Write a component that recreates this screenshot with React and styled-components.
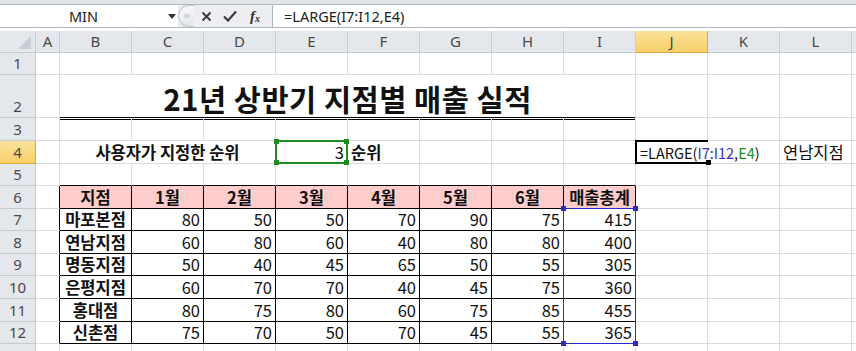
import React from "react";
import styled, { createGlobalStyle } from "styled-components";

const GlobalStyle = createGlobalStyle`
  html, body { margin: 0; padding: 0; background: #fff; }
  body { font-family: "Noto Sans CJK KR", "Noto Sans", sans-serif; }
`;

const COLS = ["A", "B", "C", "D", "E", "F", "G", "H", "I", "J", "K", "L", "M"];

const HEADER = ["지점", "1월", "2월", "3월", "4월", "5월", "6월", "매출총계"];

const BRANCHES = [
  ["마포본점", 80, 50, 50, 70, 90, 75, 415],
  ["연남지점", 60, 80, 60, 40, 80, 80, 400],
  ["명동지점", 50, 40, 45, 65, 50, 55, 305],
  ["은평지점", 60, 70, 70, 40, 45, 75, 360],
  ["홍대점", 80, 75, 80, 60, 75, 85, 455],
  ["신촌점", 75, 70, 50, 70, 45, 55, 365],
];

const GRID = "#dadcdd";

const Window = styled.div`
  width: 856px;
  height: 351px;
  overflow: hidden;
  display: flex;
  flex-direction: column;
  background: #fff;
`;

const TopBand = styled.div`
  flex: 0 0 4px;
  background: #e1e5ea;
`;

const FormulaBar = styled.div`
  flex: 0 0 24px;
  box-sizing: border-box;
  border-top: 1px solid #aeb6c1;
  border-bottom: 1px solid #aeb6c1;
  display: flex;
  align-items: stretch;
  font-family: "Noto Sans", sans-serif;
  font-size: 14.5px;
  color: #222;
`;

const NameBox = styled.div`
  width: 163px;
  margin-left: 2px;
  display: flex;
  align-items: center;
  justify-content: center;
`;

const DropArrow = styled.div`
  width: 13px;
  display: flex;
  align-items: center;
  justify-content: center;
`;

const Buttons = styled.div`
  width: 94px;
  background: #eceef1;
  display: flex;
  align-items: center;
`;

const Grip = styled.div`
  width: 16px;
  height: 22px;
  box-sizing: border-box;
  border: 1px solid #c3c8cf;
  border-right: none;
  border-radius: 11px 0 0 11px;
  background: linear-gradient(#f7f8fa, #e3e6ea);
  display: flex;
  align-items: center;
  justify-content: center;
  &::after {
    content: "";
    width: 6px;
    height: 4px;
    border-radius: 2px;
    background: #cfd3d9;
  }
`;

const IconButton = styled.div`
  width: ${(p) => p.$w}px;
  display: flex;
  align-items: center;
  justify-content: center;
`;

const Fx = styled.span`
  font-family: "Liberation Serif", serif;
  font-style: italic;
  font-weight: 700;
  font-size: 15px;
  color: #333;
  sub {
    font-size: 10px;
    vertical-align: -1px;
  }
`;

const FormulaInput = styled.div`
  flex: 1;
  border-left: 1px solid #aeb6c1;
  padding-left: 11px;
  display: flex;
  align-items: center;
`;

const Gap = styled.div`
  flex: 0 0 3px;
`;

const Sheet = styled.div`
  flex: 1;
  min-height: 0;
  overflow: hidden;
  display: grid;
  grid-template-columns: 36px 24px repeat(11, 72px) 1fr;
  grid-template-rows: 22px 22px 43px 23px 22.5px 22.5px repeat(8, 22.6px);
`;

const Head = styled.div`
  grid-row: ${(p) => p.$row};
  grid-column: ${(p) => p.$col};
  box-sizing: border-box;
  border-right: 1px solid #c5cbd3;
  border-bottom: 1px solid #c5cbd3;
  background: ${(p) =>
    p.$active ? "linear-gradient(#fbe29a, #f8cf68)" : "#e4e7ec"};
  ${(p) => p.$active && "border-bottom-color: #d9a93f; border-right-color: #d9a93f;"}
  display: flex;
  align-items: flex-end;
  justify-content: center;
  line-height: 21px;
  font-family: "Noto Sans", sans-serif;
  font-size: 15px;
  color: #4a4a4a;
`;

const Corner = styled(Head)`
  position: relative;
  &::after {
    content: "";
    position: absolute;
    right: 4px;
    bottom: 3px;
    width: 13px;
    height: 13px;
    background: #c9cdd3;
    clip-path: polygon(100% 0, 100% 100%, 0 100%);
  }
`;

const Cell = styled.div`
  grid-row: ${(p) => p.$row};
  grid-column: ${(p) => p.$col} / span ${(p) => p.$span || 1};
  box-sizing: border-box;
  border-right: 1px solid ${(p) => p.$right || GRID};
  border-bottom: 1px solid ${(p) => p.$bottom || GRID};
  background: ${(p) => p.$fill || "transparent"};
  display: flex;
  align-items: flex-end;
  justify-content: ${(p) =>
    p.$align === "right" ? "flex-end" : p.$align === "center" ? "center" : "flex-start"};
  padding: 0 3px 0;
  font-size: 16.5px;
  line-height: 21px;
  font-weight: ${(p) => (p.$bold ? 700 : 400)};
  color: #111;
  white-space: nowrap;
  overflow: visible;
`;

const Title = styled(Cell)`
  border-bottom: 3px double #000;
  margin-bottom: -2px;
  font-size: 29.5px;
  line-height: 34px;
  padding-bottom: 2px;
  letter-spacing: 0.5px;
`;

const Editing = styled(Cell)`
  font-size: 14.5px;
  padding-left: 4px;
`;

const Ref = styled.span`
  color: ${(p) => p.$color};
`;

const Caret = styled.span`
  display: inline-block;
  width: 1px;
  height: 18px;
  margin-left: 1px;
  background: #000;
  align-self: center;
`;

const RangeBox = styled.div`
  grid-row: ${(p) => p.$row};
  grid-column: ${(p) => p.$col};
  position: relative;
  margin: -1px 0 0 -1px;
  border: ${(p) => p.$weight}px solid ${(p) => p.$color};
  ${(p) => p.$open && "border-right: none;"}
  pointer-events: none;
`;

const Handle = styled.i`
  position: absolute;
  width: 5px;
  height: 5px;
  background: ${(p) => p.$color};
  ${(p) => (p.$top ? "top: -3px;" : "bottom: -3px;")}
  ${(p) => (p.$left ? "left: -3px;" : "right: -3px;")}
`;

const FORMULA = (
  <>
    =LARGE(<Ref $color="#3434c8">I7:I12</Ref>,<Ref $color="#218a21">E4</Ref>)
  </>
);

// grid column index: 1 = row header, 2 = A, 3 = B ... 14 = M
function rowCells(r) {
  const cells = [];
  const row = r + 1;
  let col = 2;
  const add = (props, content, As = Cell) => {
    cells.push(
      <As key={`${r}-${col}`} $row={row} $col={col} {...props}>
        {content}
      </As>
    );
    col += props.$span || 1;
  };
  const inTable = r >= 6 && r <= 12;

  add(inTable ? { $right: "#000" } : {});

  if (r === 2) {
    add({ $span: 8, $align: "center", $bold: true }, "21년 상반기 지점별 매출 실적", Title);
  } else if (r === 4) {
    add({ $span: 3, $align: "center", $bold: true }, "사용자가 지정한 순위");
    add({ $align: "right" }, "3");
    add({ $bold: true }, "순위");
    add({});
    add({});
    add({});
    add({ $right: "transparent" }, <>{FORMULA}<Caret /></>, Editing);
    add({});
    add({}, "연남지점");
    add({});
    return cells;
  } else if (r === 6) {
    HEADER.forEach((h) =>
      add({ $right: "#000", $bottom: "#000", $fill: "#ffcccc", $align: "center", $bold: true }, h)
    );
  } else if (inTable) {
    BRANCHES[r - 7].forEach((v, i) =>
      add({ $right: "#000", $bottom: "#000", $align: i === 0 ? "center" : "right", $bold: i === 0 }, v)
    );
  } else {
    for (let i = 0; i < 8; i++) add(r === 5 ? { $bottom: "#000" } : {});
  }
  for (let i = 0; i < 4; i++) add({});
  return cells;
}

export default function App() {
  const rows = [];
  for (let r = 1; r <= 13; r++) {
    rows.push(
      <Head key={`h${r}`} $row={r + 1} $col={1} $active={r === 4}>
        {r}
      </Head>
    );
    rows.push(...rowCells(r));
  }

  return (
    <Window>
      <GlobalStyle />
      <TopBand />
      <FormulaBar>
        <NameBox>MIN</NameBox>
        <DropArrow>
          <svg width="8" height="5" viewBox="0 0 8 5">
            <path d="M0 0h8L4 5z" fill="#333" />
          </svg>
        </DropArrow>
        <Buttons>
          <Grip />
          <IconButton $w={24}>
            <svg width="11" height="11" viewBox="0 0 11 11">
              <path d="M1.5 1.5l8 8M9.5 1.5l-8 8" stroke="#3a3a3a" strokeWidth="2" />
            </svg>
          </IconButton>
          <IconButton $w={24}>
            <svg width="14" height="12" viewBox="0 0 14 12">
              <path d="M1 6.5l4 4L13 1.5" stroke="#3a3a3a" strokeWidth="2.2" fill="none" />
            </svg>
          </IconButton>
          <IconButton $w={26}>
            <Fx>
              f<sub>x</sub>
            </Fx>
          </IconButton>
        </Buttons>
        <FormulaInput>=LARGE(I7:I12,E4)</FormulaInput>
      </FormulaBar>
      <Gap />
      <Sheet>
        <Corner $row={1} $col={1} />
        {COLS.map((c, i) => (
          <Head key={c} $row={1} $col={i + 2} $active={c === "J"}>
            {c === "M" ? "" : c}
          </Head>
        ))}
        {rows}
        <RangeBox $row={5} $col={6} $color="#238b23" $weight={2}>
          <Handle $color="#238b23" $top $left />
          <Handle $color="#238b23" $top />
          <Handle $color="#238b23" $left />
          <Handle $color="#238b23" />
        </RangeBox>
        <RangeBox $row="8 / span 6" $col={10} $color="#2a2acc" $weight={1.5}>
          <Handle $color="#2a2acc" $top $left />
          <Handle $color="#2a2acc" $top />
          <Handle $color="#2a2acc" $left />
          <Handle $color="#2a2acc" />
        </RangeBox>
        <RangeBox $row={5} $col={11} $color="#000" $weight={2} $open>
          <Handle $color="#000" />
        </RangeBox>
      </Sheet>
    </Window>
  );
}
